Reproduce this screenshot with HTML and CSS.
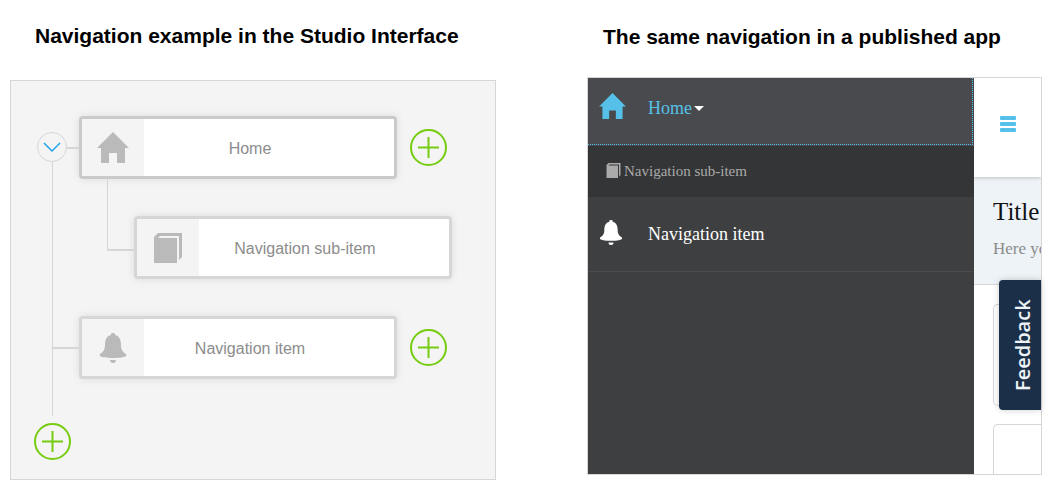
FILE: index.html
```html
<!DOCTYPE html>
<html lang="en">
<head>
<meta charset="utf-8">
<title>Navigation example</title>
<link rel="stylesheet" href="styles.css">
</head>
<body>
<svg class="sprite" aria-hidden="true">
  <symbol id="house" viewBox="0 0 32 31"><path d="M16 0 32 16H28V31H20V21H12V31H4V16H0Z"/></symbol>
  <symbol id="book" viewBox="0 0 28 30"><path d="M0 30V4L4 0H28V24L25 27V3H6L4 5H23V30Z"/></symbol>
  <symbol id="bell" viewBox="0 0 28 30"><path d="M12 1Q12 0 14 0T16 1V2C21 3 22 8 22 12C22 17 24 19 27 21C29 24 22 25 14 25S-1 24 1 21C4 19 6 17 6 12C6 8 7 3 12 2ZM11 27H17Q17 30 14 30T11 27Z"/></symbol>
  <symbol id="plus" viewBox="0 0 37 37"><g fill="none" stroke="currentColor" stroke-width="2"><circle cx="18.5" cy="18.5" r="17.5"/><path d="M8 18.5H29M18.5 8V29"/></g></symbol>
</svg>
<main class="page">
  <section class="example">
    <h2 class="heading">Navigation example in the Studio Interface</h2>
    <div class="studio">
      <div class="rail">
        <button class="toggle" type="button" aria-label="Collapse"><svg class="chevron" viewBox="0 0 18 10"><path d="M1 1 9 9 17 1"/></svg></button>
        <span class="trunk"></span>
        <button class="add" type="button" aria-label="Add item"><svg><use href="#plus"/></svg></button>
      </div>
      <ul class="tree">
        <li class="row row-first">
          <div class="node node-active"><span class="node-icon"><svg class="icon-house"><use href="#house"/></svg></span><span class="node-label">Home</span></div>
          <button class="add" type="button" aria-label="Add after Home"><svg><use href="#plus"/></svg></button>
        </li>
        <li class="row row-child">
          <div class="node"><span class="node-icon"><svg class="icon-book"><use href="#book"/></svg></span><span class="node-label">Navigation sub-item</span></div>
        </li>
        <li class="row row-last">
          <div class="node"><span class="node-icon"><svg class="icon-bell"><use href="#bell"/></svg></span><span class="node-label">Navigation item</span></div>
          <button class="add" type="button" aria-label="Add after Navigation item"><svg><use href="#plus"/></svg></button>
        </li>
      </ul>
    </div>
  </section>
  <section class="example">
    <h2 class="heading heading-app">The same navigation in a published app</h2>
    <div class="app">
      <nav class="menu">
        <a class="link link-home" href="#"><svg class="link-icon"><use href="#house"/></svg><span>Home</span><span class="caret"></span></a>
        <a class="link link-sub" href="#"><svg class="sub-icon"><use href="#book"/></svg><span>Navigation sub-item</span></a>
        <a class="link link-item" href="#"><svg class="link-icon"><use href="#bell"/></svg><span>Navigation item</span></a>
      </nav>
      <div class="content">
        <header class="bar"><button class="burger" type="button" aria-label="Menu"><span></span><span></span><span></span></button></header>
        <div class="banner">
          <h3 class="title">Title</h3>
          <p class="text">Here you</p>
        </div>
        <div class="cards">
          <div class="card"></div>
          <div class="card card-cut"></div>
        </div>
      </div>
      <button class="feedback" type="button">Feedback</button>
    </div>
  </section>
</main>
</body>
</html>
```
FILE: styles.css
```css
* { box-sizing: border-box; }
body { margin: 0; background: #fff; font-family: "Liberation Sans", Arial, sans-serif; }
button { padding: 0; border: 0; background: none; font: inherit; }
svg { display: block; fill: currentColor; }
.sprite { position: absolute; width: 0; height: 0; }

.page {
  display: grid;
  grid-template-columns: minmax(0, 486fr) minmax(0, 455fr);
  column-gap: 91px;
  align-items: start;
  padding: 0 9px 0 10px;
}
.heading {
  margin: 0;
  padding: 24px 0 32px 25px;
  font-size: 21px;
  line-height: 24px;
  color: #000;
  white-space: nowrap;
}
.heading-app { padding: 25px 0 28px 16px; }

.studio {
  display: flex;
  padding: 35px 43px 19px 23px;
  border: 1px solid #d6d6d6;
  background: #f4f4f4;
}
.rail {
  display: flex;
  flex-direction: column;
  align-items: center;
  width: 37px;
  margin: 16px 8px 0 0;
}
.toggle {
  display: grid;
  place-items: center;
  width: 30px;
  height: 30px;
  margin-right: 1px;
  border: 1px solid #d6d6d6;
  border-radius: 50%;
}
.chevron { width: 18px; height: 10px; fill: none; stroke: #169fe6; stroke-width: 1.4; }
.trunk { width: 1px; height: 254px; margin-bottom: 7px; background: #d6d6d6; }
.add { flex: none; width: 37px; height: 37px; color: #76cc10; }
.add svg { width: 100%; height: 100%; }

.tree {
  display: flex;
  flex: 1;
  flex-direction: column;
  gap: 37px;
  margin: 0;
  padding: 0;
  list-style: none;
}
.row { position: relative; display: flex; align-items: center; gap: 13px; padding-right: 5px; }
.row-child { padding: 0 0 0 55px; }
.row::before { content: ""; position: absolute; top: 31px; height: 2px; background: #d6d6d6; }
.row-first::before { left: -12px; width: 12px; }
.row-last::before { left: -26px; width: 26px; }
.row-child::before {
  top: -37px;
  left: 28px;
  width: 27px;
  height: 70px;
  border: solid #d6d6d6;
  border-width: 0 0 2px 1px;
  background: none;
}
.node {
  display: flex;
  flex: 1;
  height: 63px;
  border: 3px solid #d6d6d6;
  border-radius: 4px;
  background: #fff;
  box-shadow: 0 0 8px rgba(0, 0, 0, .1);
}
.node-active { border-color: #cacaca; }
.node-icon { display: grid; place-items: center; width: 62px; background: #f4f4f4; color: #bababa; }
.node-label {
  flex: 1;
  align-self: center;
  padding: 2px 38px 0 0;
  font-size: 16px;
  line-height: 20px;
  text-align: center;
  color: #8c8c8c;
}
.icon-house { width: 32px; height: 31px; }
.icon-book, .icon-bell { width: 28px; height: 30px; }

.app {
  position: relative;
  display: grid;
  grid-template-columns: minmax(0, 386fr) minmax(0, 67fr);
  border: 1px solid #d6d6d6;
  font-family: "Liberation Serif", "Times New Roman", serif;
}
.menu { background: #3e3f41; }
.link { display: flex; align-items: center; font-size: 18px; color: #fff; text-decoration: none; }
.link-home {
  position: relative;
  height: 68px;
  padding: 0 0 7px 11px;
  background: #494a4d;
  color: #56c0e8;
}
.link-home::after {
  content: "";
  position: absolute;
  inset: 0 1px 1px 0;
  border-right: 1px dotted #4cc4f0;
  border-bottom: 1px dotted #4cc4f0;
}
.link-icon { width: 27px; height: 26px; margin-right: 22px; }
.link-home .link-icon { margin-bottom: 6px; }
.caret { margin-left: 2px; border: solid transparent; border-width: 5px 5px 0; border-top-color: #fff; }
.link-sub { height: 51px; padding-left: 18px; background: #343537; font-size: 15px; color: #aaa; }
.sub-icon { width: 15px; height: 15px; margin: 0 3px 3px 0; }
.link-item { height: 75px; padding-left: 11px; border-bottom: 1px solid #4a4b4e; }
.link-item .link-icon { width: 24px; height: 25px; margin: 0 25px 3px 0; }

.content { display: flex; flex-direction: column; overflow: hidden; background: #fff; }
.bar {
  position: relative;
  display: flex;
  align-items: center;
  height: 99px;
  padding: 0 0 7px 26px;
  background: #fff;
  box-shadow: 0 1px 4px rgba(0, 0, 0, .2);
}
.burger { display: grid; gap: 2px; width: 16px; }
.burger span { height: 4px; border-radius: 1px; background: #56c0e8; }
.banner {
  height: 108px;
  padding: 20px 0 0 19px;
  border-bottom: 1px solid #d6d6d6;
  background: #edf3f6;
  white-space: nowrap;
}
.title { margin: 0 0 12px; font-size: 25px; font-weight: 400; line-height: 30px; color: #111; }
.text { margin: 0; font-size: 17px; line-height: 20px; color: #8c8c8c; }
.cards { display: grid; gap: 18px; padding: 19px 0 0 19px; }
.card { height: 102px; border: solid #d6d6d6; border-width: 1px 0 1px 1px; border-radius: 5px 0 0 5px; }
.card-cut { height: 50px; border-bottom: 0; border-radius: 5px 0 0; }
.feedback {
  position: absolute;
  top: 202px;
  right: 0;
  width: 42px;
  height: 130px;
  padding-right: 6px;
  border-radius: 0 4px 4px 0;
  background: #1b3048;
  color: #edf3f6;
  box-shadow: 0 0 6px rgba(0, 0, 0, .2);
  font: 600 20px/36px "Open Sans", sans-serif;
  writing-mode: vertical-rl;
  transform: rotate(180deg);
}
```
